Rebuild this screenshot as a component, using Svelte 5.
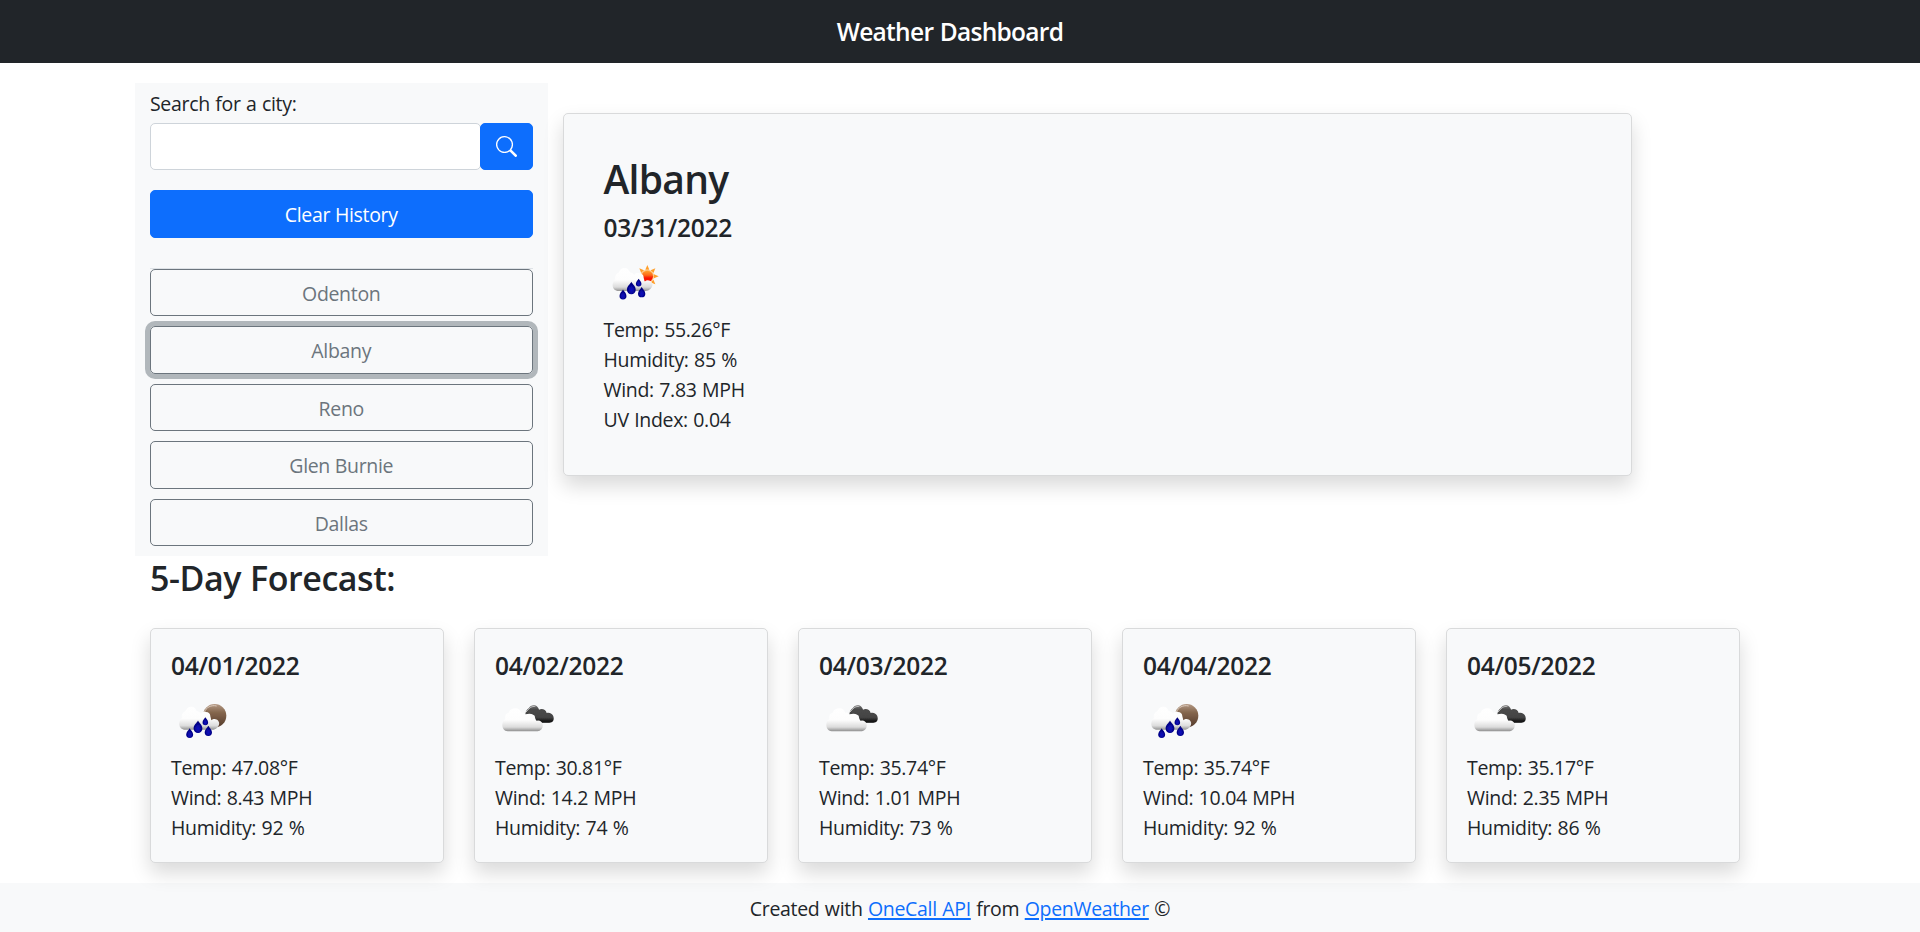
<script>
  const cities = ['Odenton', 'Albany', 'Reno', 'Glen Burnie', 'Dallas'];
  const selected = 'Albany';
  const days = [
    { date: '04/01/2022', icon: 'rain-night', temp: '47.08', wind: '8.43', humidity: 92 },
    { date: '04/02/2022', icon: 'clouds', temp: '30.81', wind: '14.2', humidity: 74 },
    { date: '04/03/2022', icon: 'clouds', temp: '35.74', wind: '1.01', humidity: 73 },
    { date: '04/04/2022', icon: 'rain-night', temp: '35.74', wind: '10.04', humidity: 92 },
    { date: '04/05/2022', icon: 'clouds', temp: '35.17', wind: '2.35', humidity: 86 }
  ];
  const rays = [0, 45, 90, 135, 180, 225, 270, 315];
</script>

<svg class="defs" aria-hidden="true">
  <defs>
    <linearGradient id="cloud" x1="0" y1="38" x2="0" y2="109" gradientUnits="userSpaceOnUse">
      <stop offset="0" stop-color="#fff" /><stop offset=".52" stop-color="#fdfdfd" />
      <stop offset=".82" stop-color="#dcdcdc" /><stop offset="1" stop-color="#8d8d8d" />
    </linearGradient>
    <linearGradient id="sun" x1="0" y1="0" x2="0" y2="1">
      <stop offset="0" stop-color="#ffa32e" /><stop offset=".4" stop-color="#fd6a18" /><stop offset=".65" stop-color="#f81204" />
    </linearGradient>
    <linearGradient id="moon" x1="0" y1="0" x2="0" y2="1">
      <stop offset="0" stop-color="#b59a85" /><stop offset=".35" stop-color="#86684f" /><stop offset="1" stop-color="#54392a" />
    </linearGradient>
    <linearGradient id="dark" x1="0" y1="30" x2="0" y2="83" gradientUnits="userSpaceOnUse">
      <stop offset="0" stop-color="#777" /><stop offset=".25" stop-color="#4a4a4a" />
      <stop offset=".7" stop-color="#444" /><stop offset="1" stop-color="#050505" />
    </linearGradient>
    <radialGradient id="drop" cx=".5" cy=".65" r=".6">
      <stop offset="0" stop-color="#0b0bc4" /><stop offset="1" stop-color="#02026e" />
    </radialGradient>
    <filter id="soft" x="-10%" y="-10%" width="120%" height="120%"><feGaussianBlur stdDeviation="1.2" /></filter>
  </defs>
</svg>

{#snippet drop(x, y, s)}
  <path transform="translate({x} {y}) scale({s})" fill="url(#drop)" d="M0-17C3-11 11-6 11 3A11 11 0 0 1-11 3C-11-6-3-11 0-17Z" />
{/snippet}

{#snippet rain()}
  <path fill="url(#cloud)" d="M52 108C42 106 37 98 38 88C39 80 43 76 46 73C44 62 49 55 56 53C60 42 67 39 73 39C81 38 87 44 90 52C96 53 101 57 103 60C106 54 112 53 118 55C126 55 131 60 131 68L134 80C140 74 150 75 155 82C160 89 157 97 151 102C147 106 142 108 137 108Z" />
  {@render drop(69, 120, 0.95)}
  {@render drop(94, 101, 1.2)}
  {@render drop(116, 84, 0.76)}
  {@render drop(125, 113, 1)}
{/snippet}

{#snippet weatherIcon(kind)}
  {#if kind === 'rain-day'}
    <svg class="weather" viewBox="12 -9 187.5 187.5" role="img" aria-label="Rain">
      <g filter="url(#soft)">
        <g transform="translate(142 64)">
          {#each rays as angle}
            <path transform="rotate({angle})" fill="#ff9f2c" d="M-6-20L0-34L6-20Z" />
          {/each}
          <circle r="20" fill="#ffc27c" />
          <circle r="17" fill="url(#sun)" />
        </g>
        {@render rain()}
      </g>
    </svg>
  {:else if kind === 'rain-night'}
    <svg class="weather" viewBox="3 -18 187.5 187.5" role="img" aria-label="Rain">
      <g filter="url(#soft)">
        <circle cx="134" cy="62" r="35" fill="url(#moon)" />
        <path fill="none" stroke="#e5d6ca" stroke-width="2.5" d="M103 53C107 37 124 29 140 33" />
        <g transform="translate(-10 -4)">{@render rain()}</g>
      </g>
    </svg>
  {:else}
    <svg class="weather" viewBox="0 -18 187.5 187.5" role="img" aria-label="Clouds">
      <g filter="url(#soft)">
        <path fill="url(#dark)" d="M91 58C92 48 97 42 102 39C105 31 119 27 127 35C132 41 132 44 132 44C141 39 153 44 155 54C162 51 172 55 175 64C179 76 173 83 163 83H132C124 78 120 72 119 62C113 57 106 57 98 58Z" />
        <path fill="none" stroke="#ccc" stroke-width="3" d="M90 54C95 50 97 45 101 43C108 33 116 35 121 34" />
        <path fill="url(#cloud)" d="M38 109C26 107 21 98 22 87C23 79 27 75 31 72C29 61 33 55 41 53C45 43 53 40 60 40C70 39 76 46 79 53C85 51 90 55 91 60C102 52 117 56 119 69L121 79C130 73 141 78 143 88C145 99 138 108 128 109Z" />
      </g>
    </svg>
  {/if}
{/snippet}

<header><h1>Weather Dashboard</h1></header>

<main>
  <div class="top">
    <aside>
      <label for="city">Search for a city:</label>
      <div class="search">
        <input id="city" type="text" />
        <button class="primary find" aria-label="Search">
          <svg width="21" height="21" viewBox="0 0 16 16" fill="currentColor"><path d="M11.742 10.344a6.5 6.5 0 1 0-1.397 1.398h-.001c.03.04.062.078.098.115l3.85 3.85a1 1 0 0 0 1.415-1.414l-3.85-3.85a1.007 1.007 0 0 0-.115-.1zM12 6.5a5.5 5.5 0 1 1-11 0 5.5 5.5 0 0 1 11 0z" /></svg>
        </button>
      </div>
      <button class="primary clear">Clear History</button>
      <div class="history">
        {#each cities as city}
          <button class="city" class:active={city === selected}>{city}</button>
        {/each}
      </div>
    </aside>
    <section class="card current">
      <h2>Albany</h2>
      <h3>03/31/2022</h3>
      {@render weatherIcon('rain-day')}
      <p>Temp: 55.26°F</p>
      <p>Humidity: 85 %</p>
      <p>Wind: 7.83 MPH</p>
      <p>UV Index: 0.04</p>
    </section>
  </div>

  <h2 class="title">5-Day Forecast:</h2>
  <div class="forecast">
    {#each days as day}
      <article class="card day">
        <h3>{day.date}</h3>
        {@render weatherIcon(day.icon)}
        <p>Temp: {day.temp}°F</p>
        <p>Wind: {day.wind} MPH</p>
        <p>Humidity: {day.humidity} %</p>
      </article>
    {/each}
  </div>
</main>

<footer>
  <span>Created with <a href="#onecall">OneCall API</a> from <a href="#openweather">OpenWeather</a> ©</span>
</footer>

<style>
  :global(body) {
    margin: 0;
    background: #fff;
    color: #212529;
    font: 400 19.5px/30px "Open Sans", "Noto Sans", sans-serif;
    letter-spacing: -.32px;
    word-spacing: .7px;
    overflow: hidden;
  }
  :global(*) { box-sizing: border-box; }
  .defs { position: absolute; width: 0; height: 0; }
  h1, h2, h3, p { margin: 0; }
  h1, h2, h3 { font-weight: 600; }
  header {
    height: 63px;
    padding: 17px 20px 0 0;
    background: #212529;
    color: #fff;
    text-align: center;
  }
  h1 { font-size: 24.5px; line-height: 30px; letter-spacing: -.7px; }
  main { width: 1650px; height: 820px; margin: 0 auto; padding-top: 20px; }
  .top { display: flex; height: 473px; }
  aside {
    width: 412.5px;
    height: 473px;
    padding: 6px 15px 0;
    background: #f8f9fa;
  }
  label { display: block; height: 34px; }
  .search { display: flex; height: 47px; }
  input {
    flex: 1;
    min-width: 0;
    height: 47px;
    margin-right: -1px;
    border: 1px solid #ced4da;
    border-radius: 5px;
    background: #fff;
    font: inherit;
    padding: 0 15px;
  }
  button {
    border: 1px solid;
    border-radius: 5px;
    font: inherit;
    letter-spacing: inherit;
    padding: 2px 0 0;
  }
  .primary { border-color: #0d6efd; background: #0d6efd; color: #fff; }
  .find { position: relative; display: flex; align-items: center; justify-content: center; width: 53px; padding-top: 0; }
  .clear { display: block; width: 100%; height: 48px; margin-top: 20px; }
  .history {
    display: flex;
    flex-direction: column;
    gap: 10px;
    margin-top: 29.6px;
    border-top: 1px solid #dee2e6;
  }
  .city {
    height: 47.5px;
    flex-shrink: 0;
    padding-top: 3px;
    border-color: #6c757d;
    background: transparent;
    color: #6c757d;
  }
  .active { box-shadow: 0 0 0 5px #b1b7bb; }
  .card {
    position: relative;
    border: 1px solid #d9dadb;
    border-radius: 5px;
    background: #f8f9fa;
    box-shadow: 0 10px 20px rgba(0, 0, 0, .15);
  }
  .current { width: 1069px; height: 363px; margin: 30px 0 0 15px; padding: 40.5px 40px; }
  .current h2 { font-size: 39px; line-height: 48px; margin-bottom: 10px; letter-spacing: -.7px; }
  h3 { font-size: 24.5px; line-height: 30px; margin-bottom: 9.5px; letter-spacing: -.28px; }
  .weather { display: block; width: 62.5px; height: 62.5px; margin-bottom: .5px; }
  .current .weather { margin-top: -.5px; }
  .title { padding: 1px 15px 0; font-size: 34px; line-height: 42px; letter-spacing: -.45px; }
  .forecast { display: grid; grid-template-columns: repeat(5, 294px); gap: 30px; padding: 29px 15px 0; }
  .day { height: 235px; padding: 22px 20px 0; }
  .day .weather { margin-top: -2px; margin-bottom: 2px; }
  footer {
    height: 49px;
    padding-top: 11px;
    background: #f8f9fa;
    text-align: center;
  }
  a { color: #0d6efd; text-decoration: underline; text-underline-offset: 2px; text-decoration-thickness: 2px; }
</style>
